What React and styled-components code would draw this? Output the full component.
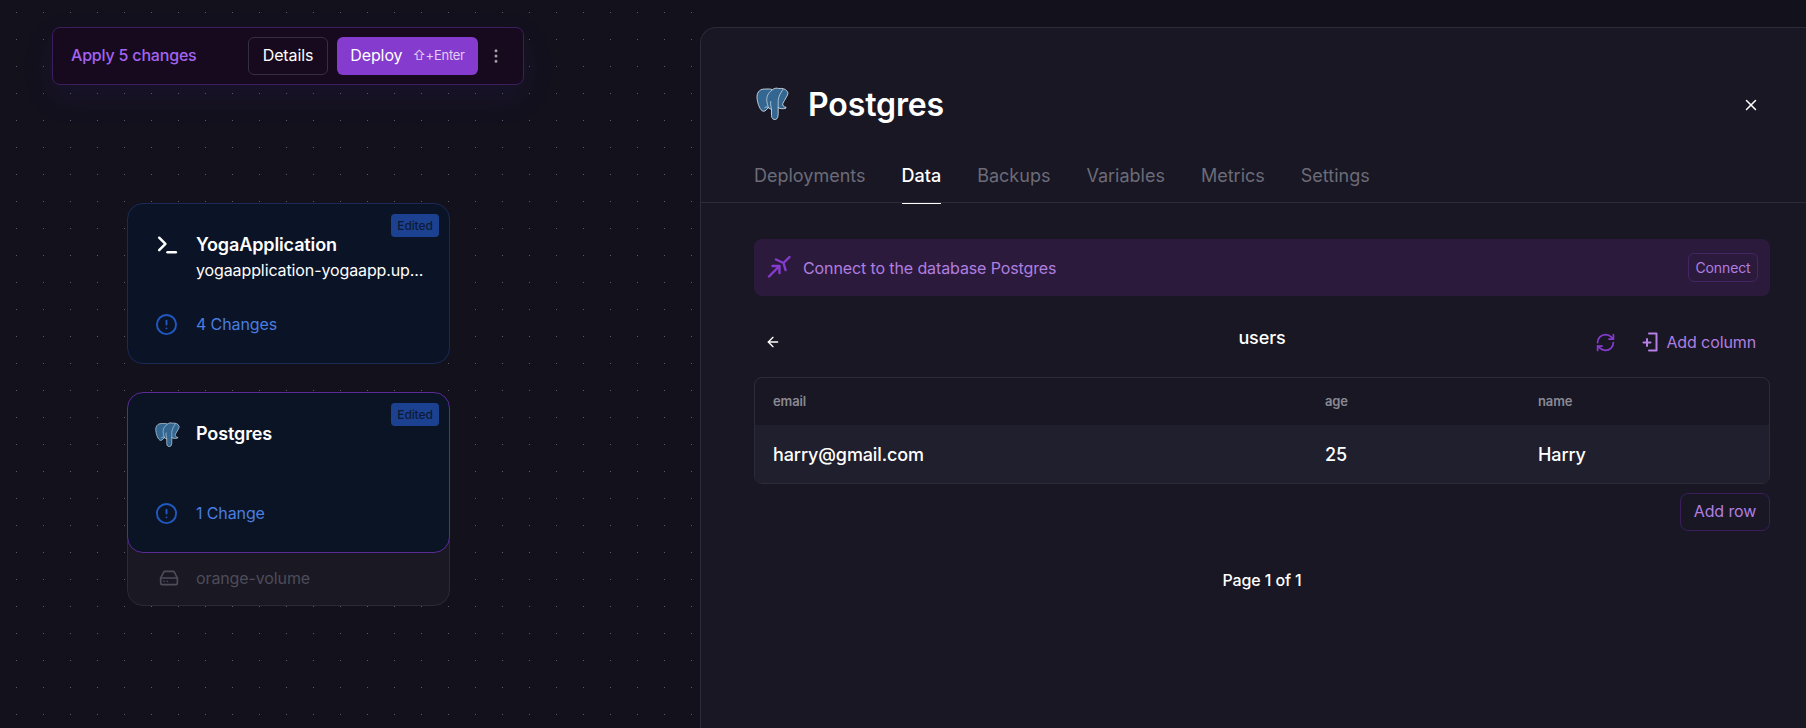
import styled, { createGlobalStyle } from "styled-components";
import {
  ArrowLeft,
  CircleAlert,
  EllipsisVertical,
  HardDrive,
  RefreshCw,
  Terminal,
  X,
} from "lucide-react";

const tabs = ["Deployments", "Data", "Backups", "Variables", "Metrics", "Settings"];

function PostgresLogo({ size }) {
  return (
    <svg width={size} height={size} viewBox="0 0 32 32" fill="none">
      <path
        d="M8 2C3 2 .5 6 1 11c.5 5 3 12 6 12.500 2 .3 3.500-2 5-3.500 1 1 2 1.500 3 1.500v6c0 3 2 4.500 4 4 2-.5 2.500-3 2.500-6v-5.500c1.500 1 4.500 1.500 7.500.5v-1c-2 0-3.500-1.500-3-3.500 2-4 5-8 5-10-1-4-5-5-9-4.500-1.500-.7-4-.5-6 1-3-1-5-.5-8-.5z"
        fill="#336791"
        stroke="#dfe8f0"
        strokeWidth="0.8"
        strokeLinejoin="round"
      />
      <path
        d="M15.500 3C11.500 6 10 9.500 10.500 14c.2 2 1 4 1.500 6M21.500 20v-7c.3-4 2.500-7.500 4.500-10.500M15 21.500c-.5-3-1.200-5-.7-7.500M8.500 20c1-.8 2-1 3.500 0"
        stroke="#dfe8f0"
        strokeWidth="0.65"
        strokeLinecap="round"
      />
    </svg>
  );
}

function ConnectIcon() {
  return (
    <svg width="24" height="24" viewBox="0 0 24 24" fill="none" stroke="#853bce" strokeWidth="2.4" strokeLinecap="round" strokeLinejoin="round">
      <path d="M2 22.500L12.500 12M5.500 12h7v7" />
      <path d="M22.500 3L16.500 9M9 5.500L16.500 9 18.500 16" />
    </svg>
  );
}

function AddColumnIcon() {
  return (
    <svg width="16" height="20" viewBox="0 0 16 20" fill="none" stroke="#b67fe6" strokeWidth="2" strokeLinecap="round" strokeLinejoin="round">
      <path d="M7 1.500h7.500v17H7" />
      <path d="M1.500 10.500h7M5 7v7" />
    </svg>
  );
}

export default function App() {
  return (
    <>
      <GlobalStyle />
      <Page>
        <Canvas>
          <Toolbar>
            <ApplyText>Apply 5 changes</ApplyText>
            <DetailsButton>Details</DetailsButton>
            <DeployButton>
              Deploy <Shortcut>⇧+Enter</Shortcut>
            </DeployButton>
            <MoreButton>
              <EllipsisVertical size={18} strokeWidth={2} />
            </MoreButton>
          </Toolbar>

          <NodeSlot $top={203}>
            <Card>
              <Badge>Edited</Badge>
              <CardRow>
                <LogoCell>
                  <Terminal size={28} strokeWidth={2.4} color="#fff" />
                </LogoCell>
                <div>
                  <CardTitle>YogaApplication</CardTitle>
                  <CardUrl>yogaapplication-yogaapp.up...</CardUrl>
                </div>
              </CardRow>
              <ChangesRow>
                <IconCell>
                  <CircleAlert size={23} strokeWidth={2} color="#2158c0" />
                </IconCell>
                <ChangesText>4 Changes</ChangesText>
              </ChangesRow>
            </Card>
          </NodeSlot>

          <NodeSlot $top={392}>
            <Card $selected>
              <Badge>Edited</Badge>
              <CardRow>
                <LogoCell>
                  <PostgresLogo size={25} />
                </LogoCell>
                <CardTitle>Postgres</CardTitle>
              </CardRow>
              <ChangesRow>
                <IconCell>
                  <CircleAlert size={23} strokeWidth={2} color="#2158c0" />
                </IconCell>
                <ChangesText>1 Change</ChangesText>
              </ChangesRow>
            </Card>
            <Volume>
              <VolumeIcon>
                <HardDrive size={20} strokeWidth={2} color="#4d4c59" />
              </VolumeIcon>
              orange-volume
            </Volume>
          </NodeSlot>
        </Canvas>

        <Panel>
          <PanelHeader>
            <HeaderLogo>
              <PostgresLogo size={33} />
            </HeaderLogo>
            <PanelTitle>Postgres</PanelTitle>
            <CloseButton>
              <X size={18} strokeWidth={2} />
            </CloseButton>
          </PanelHeader>

          <TabBar>
            {tabs.map((tab) => (
              <Tab key={tab} $active={tab === "Data"}>
                {tab}
              </Tab>
            ))}
          </TabBar>

          <PanelBody>
            <Banner>
              <BannerIcon>
                <ConnectIcon />
              </BannerIcon>
              <BannerText>Connect to the database Postgres</BannerText>
              <ConnectButton>Connect</ConnectButton>
            </Banner>

            <TableHead>
              <BackButton>
                <ArrowLeft size={16} strokeWidth={2} />
              </BackButton>
              <TableName>users</TableName>
              <TableActions>
                <RefreshCw size={21} strokeWidth={2} color="#853bce" />
                <AddColumn>
                  <AddColumnIcon />
                  Add column
                </AddColumn>
              </TableActions>
            </TableHead>

            <Table>
              <HeaderRow>
                <HeaderCell>email</HeaderCell>
                <HeaderCell>age</HeaderCell>
                <HeaderCell>name</HeaderCell>
              </HeaderRow>
              <DataRow>
                <DataCell>harry@gmail.com</DataCell>
                <DataCell>25</DataCell>
                <DataCell>Harry</DataCell>
              </DataRow>
            </Table>

            <TableFooter>
              <AddRowButton>Add row</AddRowButton>
            </TableFooter>

            <Pagination>Page 1 of 1</Pagination>
          </PanelBody>
        </Panel>
      </Page>
    </>
  );
}

const GlobalStyle = createGlobalStyle`
  * {
    box-sizing: border-box;
  }
  html, body {
    margin: 0;
    height: 100%;
    background: #13111c;
    color: #fff;
    font-family: Inter, "Noto Sans", sans-serif;
    letter-spacing: -0.007em;
    overflow: hidden;
  }
`;

const Page = styled.div`
  display: flex;
  height: 100vh;
`;

const Canvas = styled.div`
  position: relative;
  width: 700px;
  flex-shrink: 0;
  background-image: radial-gradient(circle at center, #5c5b68 0.8px, transparent 1px);
  background-size: 27px 27px;
  background-position: 3px -1px;
`;

const Toolbar = styled.div`
  position: absolute;
  left: 52px;
  top: 27px;
  width: 472px;
  height: 58px;
  display: flex;
  align-items: center;
  padding: 0 9px 0 18px;
  background: #170a1e;
  border: 1px solid #3a1f5c;
  border-radius: 8px;
  box-shadow: 0 12px 32px rgba(70, 40, 170, 0.12);
`;

const ApplyText = styled.span`
  flex: 1;
  padding-bottom: 2px;
  font-size: 16px;
  font-weight: 500;
  letter-spacing: -0.012em;
  color: #a463f2;
`;

const DetailsButton = styled.div`
  width: 80px;
  height: 38px;
  padding-bottom: 3px;
  display: flex;
  align-items: center;
  justify-content: center;
  font-size: 16px;
  font-weight: 400;
  color: #fff;
  border: 1px solid #33303f;
  border-radius: 6px;
`;

const DeployButton = styled.div`
  width: 141px;
  height: 38px;
  margin-left: 9px;
  padding-bottom: 3px;
  display: flex;
  align-items: center;
  justify-content: center;
  gap: 10px;
  font-size: 16px;
  font-weight: 400;
  color: #fff;
  background: #853bce;
  border-radius: 6px;
`;

const Shortcut = styled.span`
  font-size: 13px;
  font-family: Inter, "Noto Sans CJK JP", sans-serif;
  letter-spacing: -0.02em;
  color: #e2cdf5;
`;

const MoreButton = styled.div`
  width: 36px;
  display: flex;
  justify-content: center;
  color: #a09fa8;
`;

const NodeSlot = styled.div`
  position: absolute;
  left: 127px;
  top: ${(p) => p.$top}px;
  width: 323px;
`;

const Card = styled.div`
  position: relative;
  z-index: 1;
  height: 161px;
  display: flex;
  flex-direction: column;
  justify-content: space-between;
  padding: 29px 24px 27px 24px;
  background: ${(p) => (p.$selected ? "#0a1425" : "#0b1426")};
  border: 1px solid ${(p) => (p.$selected ? "#5a2a96" : "#1a2a55")};
  border-radius: 16px;
`;

const Badge = styled.span`
  position: absolute;
  top: 10px;
  right: 10px;
  width: 48px;
  height: 23px;
  display: flex;
  align-items: center;
  justify-content: center;
  font-size: 12px;
  font-weight: 500;
  color: #0c1a38;
  background: #1c4190;
  border-radius: 4px;
`;

const CardRow = styled.div`
  display: grid;
  grid-template-columns: 28px 1fr;
  column-gap: 16px;
`;

const ChangesRow = styled(CardRow)`
  align-items: center;
`;

const IconCell = styled.div`
  display: flex;
  align-items: center;
  justify-content: center;
  height: 24px;
`;

const LogoCell = styled(IconCell)`
  justify-content: flex-start;
  padding-left: 3px;
`;

const VolumeIcon = styled(LogoCell)`
  padding-left: 7px;
`;

const CardTitle = styled.div`
  font-size: 18px;
  line-height: 24px;
  font-weight: 600;
  color: #fff;
`;

const CardUrl = styled.div`
  margin-top: 1px;
  font-size: 16px;
  line-height: 24px;
  font-weight: 400;
  color: #fff;
  white-space: nowrap;
`;

const ChangesText = styled.span`
  font-size: 16px;
  line-height: 24px;
  color: #4a7de0;
`;

const Volume = styled.div`
  display: grid;
  grid-template-columns: 28px 1fr;
  column-gap: 16px;
  align-items: center;
  height: 69px;
  margin-top: -16px;
  padding: 13px 24px 0 24px;
  font-size: 16px;
  color: #4d4c59;
  background: #1a1823;
  border: 1px solid #2b2a36;
  border-radius: 0 0 16px 16px;
`;

const Panel = styled.section`
  flex: 1;
  margin-top: 27px;
  display: flex;
  flex-direction: column;
  background: #181723;
  border: 1px solid #2c2b39;
  border-right: 0;
  border-bottom: 0;
  border-radius: 16px 0 0 0;
`;

const PanelHeader = styled.header`
  display: flex;
  align-items: center;
  gap: 19px;
  height: 33px;
  margin-top: 60px;
  padding: 0 46px 0 55px;
`;

const HeaderLogo = styled.div`
  display: flex;
  margin-top: -3px;
`;

const PanelTitle = styled.h1`
  flex: 1;
  margin: 0;
  font-size: 32px;
  font-weight: 600;
  color: #fff;
`;

const CloseButton = styled.div`
  display: flex;
  color: #fff;
`;

const TabBar = styled.nav`
  display: flex;
  gap: 36px;
  height: 58px;
  margin-top: 24px;
  padding: 0 53px;
  border-bottom: 1px solid #2c2b39;
`;

const Tab = styled.div`
  height: 59px;
  padding-top: 18px;
  font-size: 18px;
  line-height: 26px;
  letter-spacing: 0;
  font-weight: ${(p) => (p.$active ? 500 : 400)};
  color: ${(p) => (p.$active ? "#fff" : "#6c6b78")};
  border-bottom: 1px solid ${(p) => (p.$active ? "#fff" : "transparent")};
`;

const PanelBody = styled.div`
  padding: 36px 36px 0 53px;
`;

const Banner = styled.div`
  display: flex;
  align-items: center;
  height: 57px;
  padding: 0 12px 0 13px;
  background: #2c1a3c;
  border-radius: 8px;
`;

const BannerIcon = styled.div`
  display: flex;
  margin-bottom: 3px;
`;

const BannerText = styled.span`
  flex: 1;
  margin-left: 12px;
  font-size: 16px;
  color: #b07ee0;
`;

const ConnectButton = styled.div`
  width: 70px;
  height: 29px;
  display: flex;
  align-items: center;
  justify-content: center;
  font-size: 14px;
  font-weight: 400;
  color: #b07ee0;
  border: 1px solid #432563;
  border-radius: 6px;
`;

const TableHead = styled.div`
  display: grid;
  grid-template-columns: 1fr auto 1fr;
  align-items: center;
  height: 81px;
  padding-top: 11px;
`;

const BackButton = styled.div`
  display: flex;
  padding-left: 11px;
  color: #fff;
`;

const TableName = styled.div`
  margin-top: -10px;
  font-size: 18px;
  font-weight: 500;
  color: #fff;
`;

const TableActions = styled.div`
  display: flex;
  align-items: center;
  justify-content: flex-end;
  gap: 26px;
  padding-right: 14px;
`;

const AddColumn = styled.div`
  display: flex;
  align-items: center;
  gap: 8px;
  font-size: 16px;
  font-weight: 400;
  color: #b07ee0;
`;

const Table = styled.div`
  border: 1px solid #2c2b39;
  border-radius: 8px;
  overflow: hidden;
`;

const HeaderRow = styled.div`
  display: grid;
  grid-template-columns: 552px 213px 1fr;
  align-items: center;
  height: 47px;
`;

const HeaderCell = styled.div`
  padding: 0 0 2px 18px;
  font-size: 13px;
  font-weight: 600;
  color: #8a8994;
`;

const DataRow = styled(HeaderRow)`
  height: 58px;
  background: #201f2d;
`;

const DataCell = styled.div`
  padding-left: 18px;
  font-size: 18px;
  font-weight: 500;
  color: #fff;
`;

const TableFooter = styled.div`
  display: flex;
  justify-content: flex-end;
  margin-top: 9px;
`;

const AddRowButton = styled.div`
  width: 90px;
  height: 38px;
  padding-bottom: 2px;
  display: flex;
  align-items: center;
  justify-content: center;
  font-size: 16px;
  font-weight: 400;
  color: #b07ee0;
  border: 1px solid #3a1f5c;
  border-radius: 8px;
`;

const Pagination = styled.div`
  margin-top: 37px;
  text-align: center;
  font-size: 16px;
  line-height: 24px;
  font-weight: 500;
  color: #fff;
`;
